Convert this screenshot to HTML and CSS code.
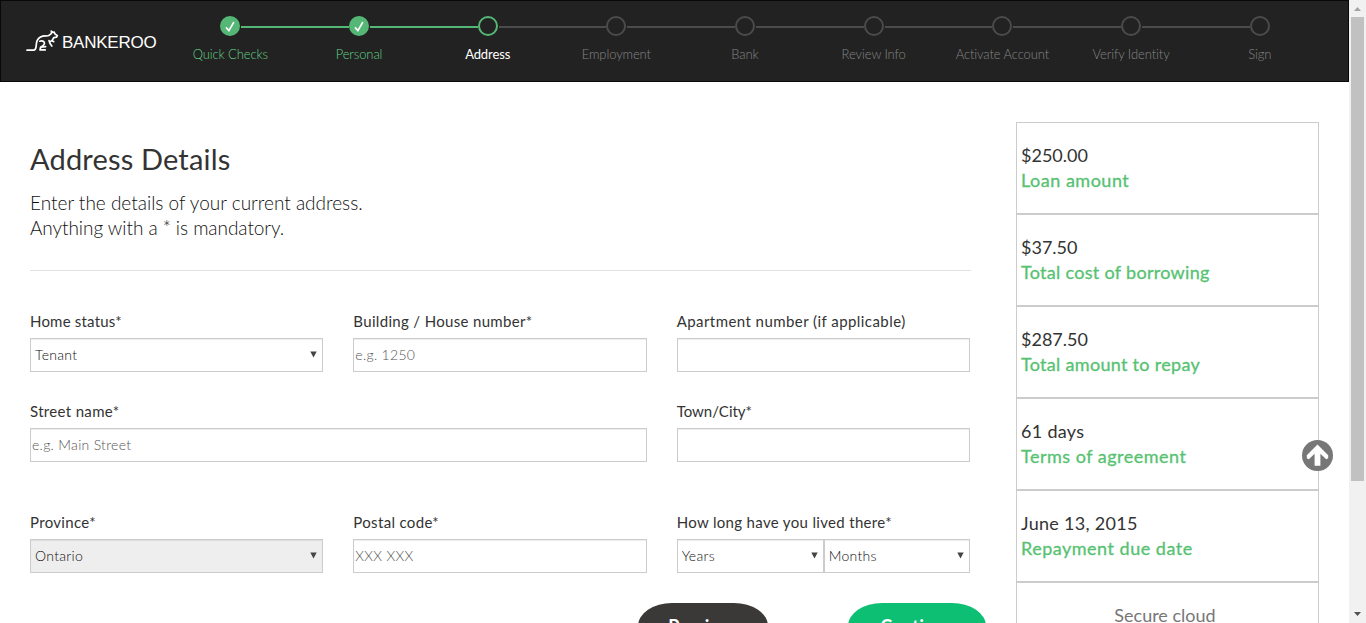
FILE: index.html
```html
<!DOCTYPE html>
<html lang="en">
<head>
<meta charset="utf-8">
<title>Bankeroo - Address Details</title>
<link rel="stylesheet" href="styles.css">
</head>
<body>
<div class="viewport">
  <div class="page">
    <header class="navbar">
      <a class="brand">
        <svg class="brand-mark" width="33" height="22" viewBox="0 0 33 22" fill="none" stroke="#fff" stroke-width="1.7" stroke-linecap="round" stroke-linejoin="round">
          <path d="M1 20.2H7.5C11.5 20.2 9.3 14 11.2 10.5C13.2 6.8 17 5.8 20.5 6C23.5 6.1 24.2 4.5 25.6 3.2L25.3 1.2L27.2 2.4L28.3 2.2L29 4L31.4 5.6L30.4 7.2L27.8 7.6C27 9.6 26 11 24 11.8"/>
          <path d="M13.8 11.2C16 10.3 18.2 11.2 18.5 13.3C18.6 15.2 16.6 16 14.6 17.2L14 19.9H19.2M14.6 17.2L19.6 16.6"/>
          <path d="M23 10.5L24 13.6L25.8 16M26.5 11L27.8 11.7"/>
        </svg>
        <span class="brand-name">BANKEROO</span>
      </a>
      <ol class="steps">
        <li class="step done"><span class="dot"><svg width="12" height="14" viewBox="0 0 12 14"><path d="M2 8.4L4.9 11.6L9.9 3" fill="none" stroke="#fff" stroke-width="1.6"/></svg></span><span class="step-label">Quick Checks</span></li>
        <li class="step done"><span class="dot"><svg width="12" height="14" viewBox="0 0 12 14"><path d="M2 8.4L4.9 11.6L9.9 3" fill="none" stroke="#fff" stroke-width="1.6"/></svg></span><span class="step-label">Personal</span></li>
        <li class="step active"><span class="dot"></span><span class="step-label">Address</span></li>
        <li class="step"><span class="dot"></span><span class="step-label">Employment</span></li>
        <li class="step"><span class="dot"></span><span class="step-label">Bank</span></li>
        <li class="step"><span class="dot"></span><span class="step-label">Review Info</span></li>
        <li class="step"><span class="dot"></span><span class="step-label">Activate Account</span></li>
        <li class="step"><span class="dot"></span><span class="step-label">Verify Identity</span></li>
        <li class="step"><span class="dot"></span><span class="step-label">Sign</span></li>
      </ol>
    </header>
    <div class="content">
      <main class="form">
        <h1 class="title">Address Details</h1>
        <p class="intro">Enter the details of your current address.<br><span class="intro-note">Anything with a * is mandatory.</span></p>
        <hr class="rule">
        <div class="grid">
          <div class="field"><label class="label l-home">Home status*</label>
            <div class="pick"><select class="control"><option>Tenant</option></select><svg class="caret" width="7" height="7"><path d="M0.3 0.5H6.7L3.5 6.5Z"/></svg></div></div>
          <div class="field"><label class="label l-building">Building / House number*</label><input class="control" placeholder="e.g. 1250"></div>
          <div class="field"><label class="label l-apartment">Apartment number (if applicable)</label><input class="control"></div>
          <div class="field wide"><label class="label l-street">Street name*</label><input class="control" placeholder="e.g. Main Street"></div>
          <div class="field"><label class="label l-town">Town/City*</label><input class="control"></div>
          <div class="field last"><label class="label l-province">Province*</label>
            <div class="pick"><select class="control locked"><option>Ontario</option></select><svg class="caret" width="7" height="7"><path d="M0.3 0.5H6.7L3.5 6.5Z"/></svg></div></div>
          <div class="field last"><label class="label l-postal">Postal code*</label><input class="control postal" placeholder="XXX XXX"></div>
          <div class="field last"><label class="label l-long">How long have you lived there*</label>
            <div class="pair">
              <div class="pick years"><select class="control"><option>Years</option></select><svg class="caret" width="7" height="7"><path d="M0.3 0.5H6.7L3.5 6.5Z"/></svg></div>
              <div class="pick"><select class="control"><option>Months</option></select><svg class="caret" width="7" height="7"><path d="M0.3 0.5H6.7L3.5 6.5Z"/></svg></div>
            </div></div>
        </div>
        <div class="actions">
          <button class="btn btn-prev">Previous</button>
          <button class="btn btn-next">Continue</button>
        </div>
      </main>
      <aside class="summary">
        <div class="card"><span class="value">$250.00</span><span class="caption c-loan">Loan amount</span></div>
        <div class="card"><span class="value">$37.50</span><span class="caption">Total cost of borrowing</span></div>
        <div class="card"><span class="value">$287.50</span><span class="caption">Total amount to repay</span></div>
        <div class="card"><span class="value v-days">61 days</span><span class="caption c-terms">Terms of agreement</span></div>
        <div class="card"><span class="value v-date">June 13, 2015</span><span class="caption c-due">Repayment due date</span></div>
        <div class="card secure"><span class="secure-text">Secure cloud</span></div>
      </aside>
    </div>
  </div>
  <div class="scrollbar">
    <svg width="7" height="4"><path d="M0 4L3.5 0L7 4Z" fill="#a3a3a3"/></svg>
    <div class="thumb"></div>
    <svg class="down" width="7" height="4"><path d="M0 0L3.5 4L7 0Z" fill="#505050"/></svg>
  </div>
  <a class="to-top"><svg width="31" height="31" viewBox="0 0 31 31"><circle cx="15.5" cy="15.5" r="15.5" fill="#777"/><path d="M15.5 4.6L26.2 15.3V18.2L24.2 19.2L18.4 13.8V25.8H12.6V13.8L6.8 19.2L4.8 18.2V15.3Z" fill="#fff"/></svg></a>
</div>
</body>
</html>
```

FILE: styles.css
```css
* { box-sizing: border-box; }
body { margin: 0; font-family: Lato, "Liberation Sans", sans-serif; color: #333; background: #fff; overflow: hidden; }
.viewport { position: relative; display: flex; width: 1366px; height: 623px; overflow: hidden; }
.page { width: 1349px; height: 623px; overflow: hidden; }

.navbar { display: flex; height: 82px; background: #222; border: 1px solid #080808; }
.brand { display: flex; width: 165px; padding: 29px 0 0 25px; color: #fff; }
.brand-mark { flex: none; }
.brand-name { margin: 2px 0 0 3px; font: 17px/22px "Liberation Sans", Arial, sans-serif; letter-spacing: -0.25px; white-space: nowrap; }

.steps { display: flex; width: 1158px; margin: 0; padding: 15px 0 0; list-style: none; }
.step { position: relative; flex: 1 1 0; display: flex; flex-direction: column; align-items: center; color: #858585; }
.step + .step::before { content: ""; position: absolute; top: 10px; right: calc(50% + 10px); width: calc(100% - 21px); height: 2px; background: #4b4b4b; }
.dot { display: flex; align-items: center; justify-content: center; width: 20px; height: 20px; border: 2px solid #4b4b4b; border-radius: 50%; }
.dot svg { flex: none; }
.step-label { margin-top: 9px; font-size: 13px; line-height: 18px; font-weight: 300; letter-spacing: -.1px; white-space: nowrap; }
.step.done { color: #62cf86; }
.step.done .dot { background: #55b776; border-color: #55b776; }
.step.active { color: #fff; }
.step.active .step-label { font-weight: 400; }
.step.active .dot { border-color: #55b776; }
.step.done + .step::before { background: #55b776; }

.content { display: flex; padding: 40px 30px 0; }
.form { width: 940px; margin-right: 46px; }
.title { margin: 19px 0 0; font-size: 29px; font-weight: 400; line-height: 36px; letter-spacing: .17px; }
.intro { margin: 13px 0 0; font-size: 19px; line-height: 25px; font-weight: 300; color: #111; }
.intro-note { letter-spacing: -.05px; }
.rule { width: 941px; height: 1px; margin: 30px 0 0; border: 0; background: #e1e1e1; }

.grid { display: grid; grid-template-columns: repeat(3, 293.33px); column-gap: 30px; padding-top: 40px; }
.field { height: 90px; }
.wide { grid-column: span 2; }
.last { margin-top: 21px; }
.label { display: block; height: 27px; font-size: 15px; line-height: 21px; white-space: nowrap; letter-spacing: .33px; }
.l-home { letter-spacing: .2px; }
.l-apartment { letter-spacing: .44px; }
.l-town { letter-spacing: 0; }
.control { display: block; width: 100%; height: 34px; padding: 0 0 1px 1px; border: 1px solid #ccc; border-radius: 0; background: #fff; box-shadow: inset 0 1px 1px rgba(0,0,0,.075); color: #111; font: 300 14px/20px Lato, sans-serif; letter-spacing: .3px; appearance: none; outline: 0; }
.control::placeholder { color: #555; opacity: 1; }
select.control { padding: 0 0 0 4px; opacity: 1; }
.control.locked { background: #eee; }
.pick { position: relative; flex: 1; }
.years { flex: 0 0 147px; }
.caret { position: absolute; right: 6px; top: 13px; fill: #444; }
.pair { display: flex; }

.actions { display: flex; gap: 80px; margin: 1px -16px 0 608px; }
.btn { width: 130px; height: 46px; padding: 0; border: 0; border-radius: 34px / 23px; color: #fff; background: #3a3937; font: 700 18px/46px Lato, sans-serif; }
.btn-next { width: 138px; background: #0dbf73; }

.summary { flex: none; width: 303px; }
.card { display: flex; flex-direction: column; height: 92px; padding: 20px 0 0 4px; border: 1px solid #ccc; font-size: 18px; line-height: 25px; }
.value { color: #333; }
.v-days { letter-spacing: .3px; }
.v-date { letter-spacing: .3px; }
.caption { color: #56c271; letter-spacing: .3px; -webkit-text-stroke: .3px #56c271; }
.c-loan, .c-due { letter-spacing: .5px; }
.c-terms { letter-spacing: .5px; }
.secure { align-items: center; padding: 20px 5px 0 0; color: #777; }

.scrollbar { display: flex; flex-direction: column; align-items: center; width: 17px; height: 623px; padding: 7px 0 7px; background: #f1f1f1; }
.scrollbar svg { flex: none; }
.thumb { width: 13px; height: 464px; margin-top: 6px; background: #c1c1c1; }
.down { margin-top: auto; }
.to-top { position: absolute; left: 1302px; top: 440px; width: 31px; height: 31px; }
.to-top svg { display: block; }
```
